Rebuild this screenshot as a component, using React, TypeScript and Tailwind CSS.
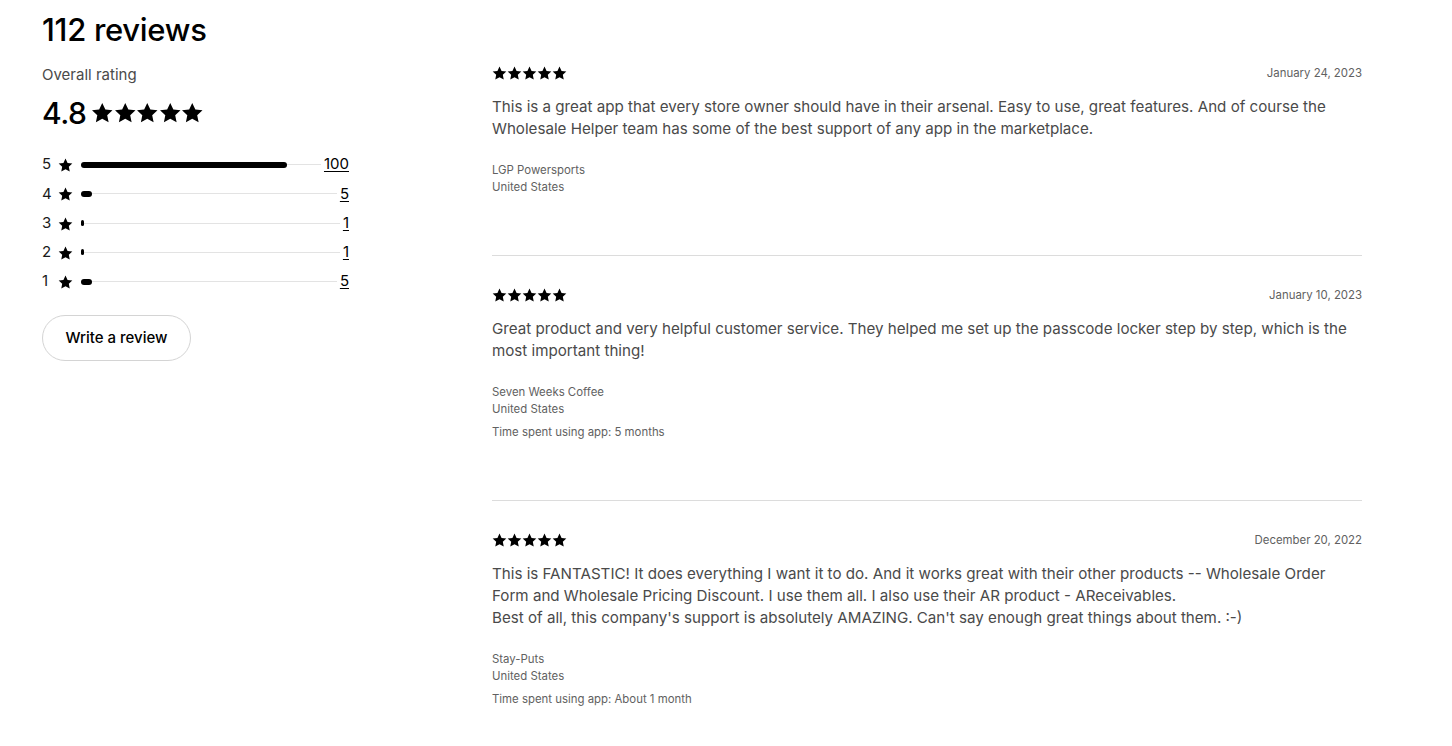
import React from "react";

type Review = {
  date: string;
  body: string[];
  author: string;
  country: string;
  timeSpent?: string;
};

const reviews: Review[] = [
  {
    date: "January 24, 2023",
    body: [
      "This is a great app that every store owner should have in their arsenal. Easy to use, great features. And of course the Wholesale Helper team has some of the best support of any app in the marketplace.",
    ],
    author: "LGP Powersports",
    country: "United States",
  },
  {
    date: "January 10, 2023",
    body: [
      "Great product and very helpful customer service. They helped me set up the passcode locker step by step, which is the most important thing!",
    ],
    author: "Seven Weeks Coffee",
    country: "United States",
    timeSpent: "5 months",
  },
  {
    date: "December 20, 2022",
    body: [
      "This is FANTASTIC! It does everything I want it to do. And it works great with their other products -- Wholesale Order Form and Wholesale Pricing Discount. I use them all. I also use their AR product - AReceivables.",
      "Best of all, this company's support is absolutely AMAZING. Can't say enough great things about them. :-)",
    ],
    author: "Stay-Puts",
    country: "United States",
    timeSpent: "About 1 month",
  },
];

const breakdown = [
  { stars: 5, count: 100 },
  { stars: 4, count: 5 },
  { stars: 3, count: 1 },
  { stars: 2, count: 1 },
  { stars: 1, count: 5 },
];

function Star({ className }: { className?: string }) {
  return (
    <svg viewBox="0 0 20 20" className={className} fill="currentColor" aria-hidden>
      <path d="M10 0.8l2.75 5.8 6.35.75-4.7 4.35 1.25 6.3L10 14.85l-5.65 3.15 1.25-6.3L0.9 7.35l6.35-.75L10 0.8z" />
    </svg>
  );
}

function Stars({ size }: { size: string }) {
  return (
    <div className="flex items-center">
      {[0, 1, 2, 3, 4].map((i) => (
        <Star key={i} className={size} />
      ))}
    </div>
  );
}

export default function App() {
  const total = 112;

  return (
    <div
      className="min-h-screen bg-white pl-[42px] pt-[10px] text-black"
      style={{ fontFamily: "Inter, 'Noto Sans', sans-serif" }}
    >
      <h2 className="text-[31px] font-medium leading-[40px] tracking-[-0.3px]">112 reviews</h2>

      <div className="flex gap-[143px]">
        {/* Left: summary */}
        <div className="w-[307px] shrink-0">
          <p className="mt-[15px] text-[15px] leading-5 text-[#4a4a4a]">Overall rating</p>
          <div className="mt-[8px] flex items-center gap-[5px]">
            <span className="text-[30px] font-medium leading-[40px] tracking-[-0.5px]">4.8</span>
            <Stars size="h-[22.5px] w-[22.5px]" />
          </div>

          <div className="mt-[17px] flex flex-col">
            {breakdown.map((row) => (
              <div key={row.stars} className="flex h-[29.25px] items-center text-[15px]">
                <span className="w-[9px] text-[#1a1a1a]">{row.stars}</span>
                <Star className="ml-[7px] mt-[2px] h-[15px] w-[15px]" />
                <div className="relative ml-[8px] flex h-[7px] flex-1 items-center">
                  <div className="h-px w-full bg-[#e3e3e3]" />
                  <div
                    className="absolute left-0 h-[6px] rounded-full bg-black"
                    style={{ width: `${Math.max((row.count / total) * 96, 1)}%` }}
                  />
                </div>
                <a href="#" className="ml-[3px] text-[15px] text-black underline underline-offset-2">
                  {row.count}
                </a>
              </div>
            ))}
          </div>

          <button className="mt-[19px] h-[46px] w-[149px] rounded-full border border-[#d4d4d4] bg-white text-[15px] font-medium text-black">
            Write a review
          </button>
        </div>

        {/* Right: reviews */}
        <div className="w-[870px] shrink-0 pt-[15px]">
          {reviews.map((r, i) => (
            <div
              key={r.date}
              className={`${i > 0 ? "border-t border-[#dcdcdc] pt-[31px]" : ""} pb-[59px]`}
            >
              <div className="flex items-center justify-between">
                <Stars size="h-[15px] w-[15px]" />
                <span className="text-[11.4px] text-[#616161]">{r.date}</span>
              </div>
              <div className="mt-[14px] text-[15.15px] leading-[22px] text-[#4a4a4a]">
                {r.body.map((p) => (
                  <p key={p}>{p}</p>
                ))}
              </div>
              <div className="mt-[22px] text-[11.4px] leading-[17px] text-[#616161]">
                <p>{r.author}</p>
                <p>{r.country}</p>
                {r.timeSpent && <p className="mt-[6px]">Time spent using app: {r.timeSpent}</p>}
              </div>
            </div>
          ))}
        </div>
      </div>
    </div>
  );
}
